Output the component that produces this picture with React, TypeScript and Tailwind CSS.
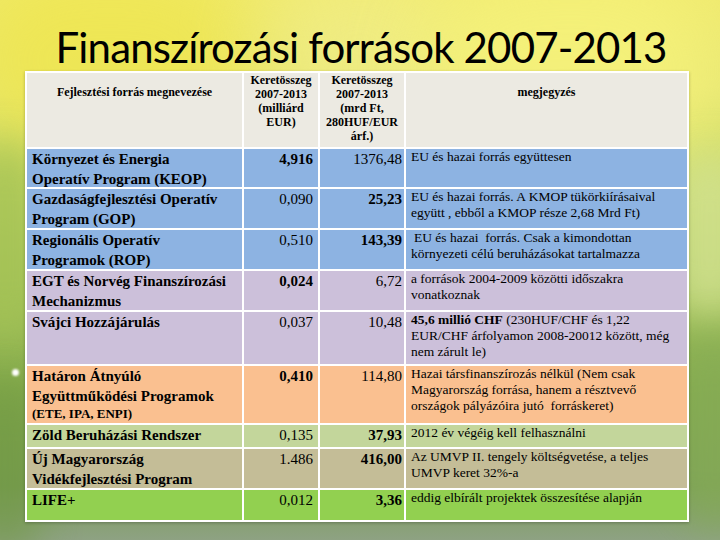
import React from "react";

type Row = {
  bg: string;
  name: React.ReactNode;
  v1: string;
  v1b: boolean;
  v2: string;
  v2b: boolean;
  note: React.ReactNode;
};

const rows: Row[] = [
  {
    bg: "bg-[#8db3e2]",
    name: (<>Környezet és Energia<br />Operatív Program (KEOP)</>),
    v1: "4,916", v1b: true, v2: "1376,48", v2b: false,
    note: <>EU és hazai forrás együttesen</>,
  },
  {
    bg: "bg-[#8db3e2]",
    name: (<>Gazdaságfejlesztési Operatív<br />Program (GOP)</>),
    v1: "0,090", v1b: false, v2: "25,23", v2b: true,
    note: (<>EU és hazai forrás. A KMOP tükörkiírásaival<br />együtt , ebből a KMOP része 2,68 Mrd Ft)</>),
  },
  {
    bg: "bg-[#8db3e2]",
    name: (<>Regionális Operatív<br />Programok (ROP)</>),
    v1: "0,510", v1b: false, v2: "143,39", v2b: true,
    note: (<><span className="ml-[3px]">EU és hazai&nbsp; forrás. Csak a kimondottan</span><br />környezeti célú beruházásokat tartalmazza</>),
  },
  {
    bg: "bg-[#ccc0da]",
    name: (<>EGT és Norvég Finanszírozási<br />Mechanizmus</>),
    v1: "0,024", v1b: true, v2: "6,72", v2b: false,
    note: (<>a források 2004-2009 közötti időszakra<br />vonatkoznak</>),
  },
  {
    bg: "bg-[#ccc0da]",
    name: <>Svájci Hozzájárulás</>,
    v1: "0,037", v1b: false, v2: "10,48", v2b: false,
    note: (<><b>45,6 millió CHF</b> (230HUF/CHF és 1,22<br />EUR/CHF árfolyamon 2008-20012 között, még<br />nem zárult le)</>),
  },
  {
    bg: "bg-[#fac090]",
    name: (<>Határon Átnyúló<br />Együttműködési Programok<br /><span className="block text-[13px] leading-[16px]">(ETE, IPA, ENPI)</span></>),
    v1: "0,410", v1b: true, v2: "114,80", v2b: false,
    note: (<>Hazai társfinanszírozás nélkül (Nem csak<br />Magyarország forrása, hanem a résztvevő<br />országok pályázóira jutó&nbsp; forráskeret)</>),
  },
  {
    bg: "bg-[#c3d69b]",
    name: <>Zöld Beruházási Rendszer</>,
    v1: "0,135", v1b: false, v2: "37,93", v2b: true,
    note: <>2012 év végéig kell felhasználni</>,
  },
  {
    bg: "bg-[#c4bd97]",
    name: (<>Új Magyarország<br />Vidékfejlesztési Program</>),
    v1: "1.486", v1b: false, v2: "416,00", v2b: true,
    note: (<>Az UMVP II. tengely költségvetése, a teljes<br />UMVP keret 32%-a</>),
  },
  {
    bg: "bg-[#92d050]",
    name: <>LIFE+</>,
    v1: "0,012", v1b: false, v2: "3,36", v2b: true,
    note: <>eddig elbírált projektek összesítése alapján</>,
  },
];

const serif = "[font-family:Liberation_Serif,serif]";

export default function App() {
  return (
    <div className="relative w-[720px] h-[540px] overflow-hidden bg-[linear-gradient(180deg,#eee96e_0%,#e6e672_16%,#c9da66_32%,#a5c45a_52%,#84aa4c_72%,#7a9d56_90%,#8ea283_100%)]">
      <div className="absolute left-[-40px] top-[-40px] w-[300px] h-[200px] rounded-full bg-[#f0e64a] opacity-70 blur-[40px]" />
      <div className="absolute left-[260px] top-[-30px] w-[200px] h-[150px] rounded-full bg-[#f3ef8e] opacity-60 blur-[40px]" />
      <div className="absolute right-[0px] top-[-30px] w-[300px] h-[200px] rounded-full bg-[#f7f37c] opacity-80 blur-[40px]" />
      <div className="absolute right-[-30px] top-[150px] w-[80px] h-[170px] rounded-full bg-[#d3e292] opacity-80 blur-[20px]" />
      <div className="absolute right-[-30px] top-[330px] w-[70px] h-[200px] rounded-full bg-[#87ad57] opacity-70 blur-[20px]" />
      <div className="absolute left-[-30px] top-[140px] w-[70px] h-[200px] rounded-full bg-[#a4c255] opacity-80 blur-[20px]" />
      <div className="absolute left-[-30px] top-[380px] w-[70px] h-[180px] rounded-full bg-[#6f9840] opacity-60 blur-[20px]" />
      <div className="absolute left-[12px] top-[369px] w-[7px] h-[7px] rounded-full bg-white blur-[1px]" />

      <div className="relative h-[71px] flex justify-center pt-[22px] pl-[2px]">
        <h1 className="[font-family:Lato,sans-serif] text-[42px] leading-[50px] tracking-[-0.85px] text-black font-normal whitespace-nowrap">
          Finanszírozási források 2007-2013
        </h1>
      </div>

      <div className="relative ml-[25px] w-[664px] bg-white p-[2px] grid grid-cols-[215px_74px_84px_281px] grid-rows-[74px_38px_39px_39px_39px_52px_57px_22px_39px_30px] gap-[2px] [font-family:Liberation_Serif,serif] text-black shadow-[0_1px_3px_rgba(0,0,0,0.25)]">
        <div className={`${serif} bg-[#eceae2] pt-[12px] text-center text-[12px] leading-[14px] font-bold`}>
          Fejlesztési forrás megnevezése
        </div>
        <div className={`${serif} bg-[#eceae2] text-center text-[12px] leading-[14px] font-bold`}>
          Keretösszeg<br />2007-2013<br />(milliárd<br />EUR)
        </div>
        <div className={`${serif} bg-[#eceae2] text-center text-[12px] leading-[14px] font-bold`}>
          Keretösszeg<br />2007-2013<br />(mrd Ft,<br />280HUF/EUR<br />árf.)
        </div>
        <div className={`${serif} bg-[#eceae2] pt-[12px] text-center text-[12px] leading-[14px] font-bold`}>
          megjegyzés
        </div>

        {rows.map((r, i) => (
          <React.Fragment key={i}>
            <div className={`${serif} ${r.bg} pl-[5px] text-[15px] leading-[20px] font-bold whitespace-nowrap`}>
              {r.name}
            </div>
            <div className={`${serif} ${r.bg} pr-[5px] text-right text-[15px] leading-[20px] ${r.v1b ? "font-bold" : "font-normal"}`}>
              {r.v1}
            </div>
            <div className={`${serif} ${r.bg} pr-[2px] text-right text-[15px] leading-[20px] ${r.v2b ? "font-bold" : "font-normal"}`}>
              {r.v2}
            </div>
            <div className={`${serif} ${r.bg} pl-[5px] text-[13.5px] leading-[16px] whitespace-nowrap`}>
              {r.note}
            </div>
          </React.Fragment>
        ))}
      </div>
    </div>
  );
}
